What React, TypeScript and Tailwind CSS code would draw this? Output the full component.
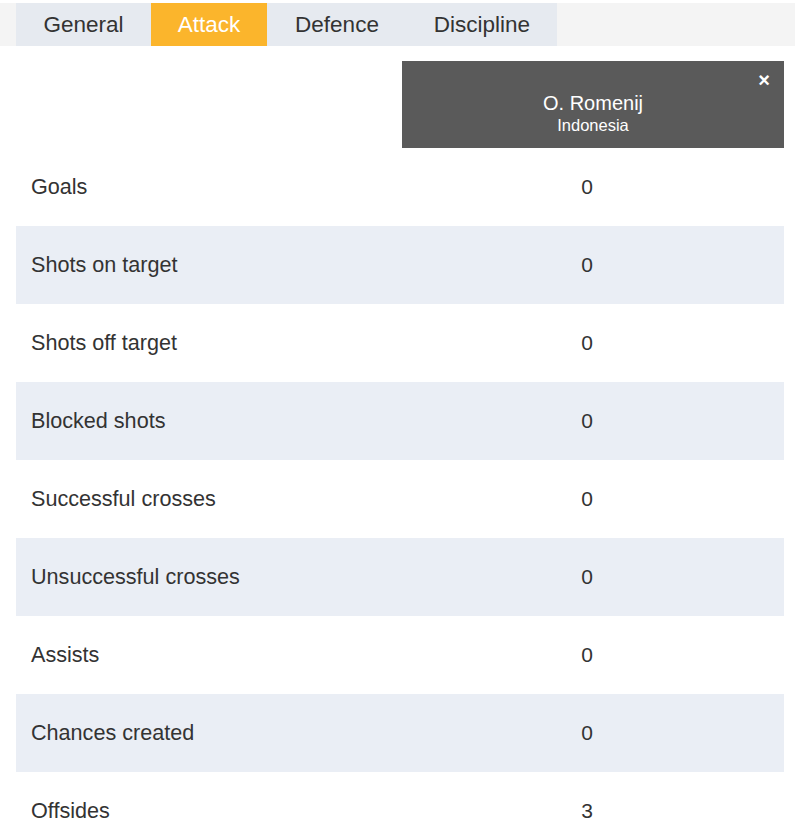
import React from 'react';

const tabs = [
  { label: 'General', width: 'w-[135px]' },
  { label: 'Attack', width: 'w-[116px]', active: true },
  { label: 'Defence', width: 'w-[140px]' },
  { label: 'Discipline', width: 'w-[150px]' },
];

const stats: [string, number][] = [
  ['Goals', 0],
  ['Shots on target', 0],
  ['Shots off target', 0],
  ['Blocked shots', 0],
  ['Successful crosses', 0],
  ['Unsuccessful crosses', 0],
  ['Assists', 0],
  ['Chances created', 0],
  ['Offsides', 3],
];

export default function App() {
  return (
    <div className="w-[800px] min-h-[839px] bg-white pt-[3px] text-[#333] font-['Liberation_Sans',Arial,sans-serif]">
      {/* Tabs */}
      <div className="w-[795px] h-[43px] bg-[#f4f4f4] pl-4 flex">
        {tabs.map(t => (
          <div
            key={t.label}
            className={`${t.width} h-full flex items-center justify-center text-[22.5px] ${
              t.active ? 'bg-[#fbb52c] text-white' : 'bg-[#e6eaf0] text-[#333]'
            }`}
          >
            {t.label}
          </div>
        ))}
      </div>

      <div className="px-4 w-[784px] box-content">
        {/* Player header */}
        <div className="flex mt-[15px]">
          <div className="w-[386px]" />
          <div className="relative w-[382px] h-[87px] bg-[#5a5a5a] text-white flex flex-col items-center justify-center pt-[16px]">
            <button className="absolute right-[14px] top-[9px] text-[20px] font-bold leading-none text-white">×</button>
            <div className="text-[20px] leading-[24px]">O. Romenij</div>
            <div className="text-[16.5px] leading-[20px]">Indonesia</div>
          </div>
        </div>

        {/* Stats rows */}
        <div className="flex flex-col">
          {stats.map(([label, value], i) => (
            <div
              key={label}
              className={`flex items-center h-[78px] w-[768px] ${i % 2 === 1 ? 'bg-[#eaeef5]' : ''}`}
            >
              <div className="w-[386px] pl-[15px] text-[21.6px]">{label}</div>
              <div className="w-[370px] text-center text-[21px]">{value}</div>
            </div>
          ))}
        </div>
      </div>
    </div>
  );
}
